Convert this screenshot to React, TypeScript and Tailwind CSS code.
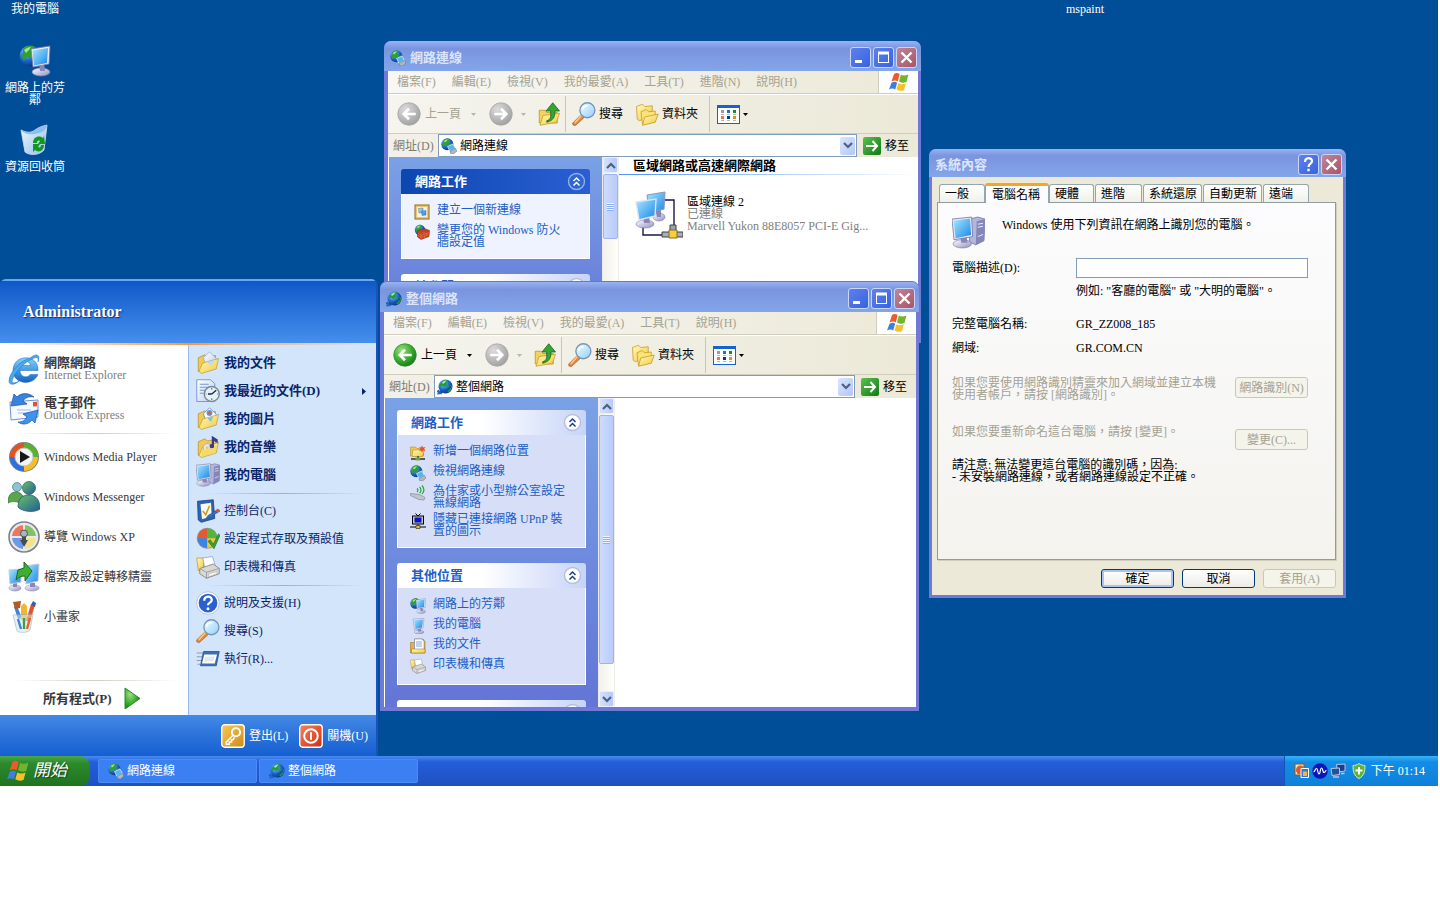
import type { ReactNode } from "react";

const FONT = "font-['Liberation_Serif','Noto_Sans_CJK_TC',serif]";

type IconProps = { className?: string };

function Svg({ className = "h-4 w-4", children }: { className?: string; children: ReactNode }) {
  return (
    <svg viewBox="0 0 32 32" className={`shrink-0 ${className}`} aria-hidden="true">
      {children}
    </svg>
  );
}

function Gradient({ id, from, to, diagonal }: { id: string; from: string; to: string; diagonal?: boolean }) {
  return (
    <linearGradient id={id} x1="0" y1="0" x2={diagonal ? "1" : "0"} y2="1">
      <stop offset="0" stopColor={from} />
      <stop offset="1" stopColor={to} />
    </linearGradient>
  );
}

function SharedGradients() {
  return (
    <svg className="absolute h-0 w-0" aria-hidden="true">
      <defs>
        <Gradient id="screen" from="#a5e8ff" to="#1b86e8" diagonal />
        <Gradient id="folder" from="#fffab8" to="#f2c840" diagonal />
        <Gradient id="stand" from="#ffffff" to="#8d8fbe" diagonal />
        <Gradient id="go" from="#5cc24e" to="#0d7a15" diagonal />
        <Gradient id="lens" from="#f4fdff" to="#8fd0fa" diagonal />
        <Gradient id="ie" from="#7fd4fb" to="#1264c4" />
        <Gradient id="bin" from="#f3faff" to="#8fbdec" diagonal />
        <Gradient id="gold" from="#f5c95a" to="#d08a12" diagonal />
        <Gradient id="red" from="#f5845f" to="#cf2d10" diagonal />
        <Gradient id="paper" from="#ffffff" to="#b9d0f2" diagonal />
        <Gradient id="figure" from="#6cc06a" to="#1f5d94" diagonal />
        <radialGradient id="globe" cx="0.35" cy="0.3" r="0.8">
          <stop offset="0" stopColor="#8fd0ff" />
          <stop offset="0.5" stopColor="#1d6ad6" />
          <stop offset="1" stopColor="#082478" />
        </radialGradient>
        <radialGradient id="green" cx="0.35" cy="0.3" r="0.8">
          <stop offset="0" stopColor="#9be27c" />
          <stop offset="0.6" stopColor="#35a52e" />
          <stop offset="1" stopColor="#12701a" />
        </radialGradient>
        <radialGradient id="grey" cx="0.35" cy="0.3" r="0.8">
          <stop offset="0" stopColor="#dcdcdc" />
          <stop offset="1" stopColor="#9c9c9c" />
        </radialGradient>
      </defs>
    </svg>
  );
}

function GlobeArt() {
  return (
    <>
      <circle cx="11" cy="11" r="10.5" fill="url(#globe)" />
      <path d="M4 4c4-4 9-4 12-2l-3 4 2 3-4 4-3-1-3 4-3-5 2-3zM14 11l7-2c1 5-1 9-5 11l-3-5z" fill="#2f9e35" />
      <path d="M5 5c2-2 5-3 7-3l-2 3-3 3z" fill="#a8e388" />
    </>
  );
}

function NetworkPlaces({ className }: IconProps) {
  return (
    <Svg className={className}>
      <GlobeArt />
      <ellipse cx="22" cy="27" rx="9" ry="4" fill="url(#stand)" stroke="#7c7aa8" strokeWidth=".6" />
      <path d="M20 18h5l1 8h-5z" fill="#8c86b8" />
      <path d="M12 4 31 1l-1 18-16 3z" fill="#eceaf6" stroke="#77749f" strokeWidth=".8" />
      <path d="m13.500 5.500 15.500-2.500-1 15-13 2.500z" fill="url(#screen)" />
    </Svg>
  );
}

function Connections({ className }: IconProps) {
  return (
    <Svg className={className}>
      <g transform="scale(1.15)"><GlobeArt /></g>
      <path d="m13 17 11-5 5 9-11 6z" fill="#57b4f2" stroke="#e8eef4" strokeWidth="1.400" />
      <path d="m18 27 11-6 3 5-7 6-6-1z" fill="#aeb9c2" stroke="#4d5a67" strokeWidth=".8" />
    </Svg>
  );
}

function WholeNetwork({ className }: IconProps) {
  return (
    <Svg className={className}>
      <circle cx="17" cy="15" r="14" fill="url(#globe)" />
      <path d="M7 8c5-7 12-7 16-5l-4 5 1 5-6 3-4-3-4 4c-1-3-1-6 1-9zM21 14l9-1c1 5-2 11-8 14l-3-6z" fill="#239a3c" />
      <path d="M1 23c5 6 17 4 27-8" fill="none" stroke="#1550a8" strokeWidth="4" />
      <path d="m0 31 3-9 8 8z" fill="#2364c4" />
      <path d="M10 7c3-3 6-4 9-4l-3 4-4 3z" fill="#c9f2ff" opacity=".8" />
    </Svg>
  );
}

function Computer({ className }: IconProps) {
  return (
    <Svg className={className}>
      <path d="m17 3 8-2 7 2-1 21-8 4-6-3z" fill="#b4b6de" stroke="#6a6c9c" strokeWidth=".7" />
      <path d="m24 5 8-2-1 21-8 4z" fill="#8486b8" />
      <path d="m25 8 5-1M25 11l5-1M25 20l5-2" stroke="#e5e6fa" />
      <ellipse cx="10" cy="27" rx="9" ry="4" fill="url(#stand)" stroke="#7c7aa8" strokeWidth=".6" />
      <path d="M8 19h6l1 7H9z" fill="#8c86b8" />
      <path d="M0 3 19 1l1 19-18 3z" fill="#eceaf6" stroke="#77749f" strokeWidth=".8" />
      <path d="m1.500 4.500 16-2 1 16-15 3z" fill="url(#screen)" />
    </Svg>
  );
}

function MonitorIcon({ className }: IconProps) {
  return (
    <Svg className={className}>
      <ellipse cx="18" cy="28" rx="10" ry="3.500" fill="url(#stand)" stroke="#7c7aa8" strokeWidth=".8" />
      <path d="M15 19h7v8h-6z" fill="#8c86b8" />
      <path d="m6 2 22-1-2 19-17 4z" fill="#eceaf6" stroke="#77749f" strokeWidth=".8" />
      <path d="m8 4 18-1-2 16-13 3z" fill="url(#screen)" />
    </Svg>
  );
}

function RecycleBin({ className }: IconProps) {
  return (
    <Svg className={className}>
      <path d="M2 6c6 3 10 3 14 0s8-4 12-5l-3 25c-4 5-14 6-19 2z" fill="url(#bin)" stroke="#cfe3f8" strokeWidth=".8" />
      <path d="M2 6c6 3 10 3 14 0s8-4 12-5c-1 6-6 8-12 9S5 10 2 6z" fill="#7fb5ea" opacity=".8" />
      <path d="M14 19c0-7 7-8 10-5l1-2 1 8h-7l2-3c-2-1-3 0-3 2zM25 21c0 6-6 8-9 5l-2 2v-8h7l-2 3c2 1 3 0 3-2z" fill="#0f9a1e" />
    </Svg>
  );
}

function FolderBack() {
  return <path d="M3 9 12 5l3 3 11-2v6L8 29 3 27z" fill="#f0cb50" stroke="#a88118" strokeWidth=".8" />;
}

function FolderFront() {
  return <path d="m9 16 21-6-3 14-20 6-3-3z" fill="url(#folder)" stroke="#b58f24" strokeWidth=".8" />;
}

function DocsFolder({ className }: IconProps) {
  return (
    <Svg className={className}>
      <FolderBack />
      <path d="m10 9 8-8 9 9-6 11-9-5z" fill="url(#paper)" stroke="#6b93cf" strokeWidth=".7" />
      <FolderFront />
      <path d="m15 15 10-3-5 8z" fill="#b9dcf5" />
    </Svg>
  );
}

function PicturesFolder({ className }: IconProps) {
  return (
    <Svg className={className}>
      <FolderBack />
      <path d="m10 9 8-8 9 9-6 11-9-5z" fill="#fff" stroke="#5c80bd" />
      <circle cx="18" cy="8" r="4" fill="#5b9be8" />
      <circle cx="18" cy="8" r="2" fill="#e55a2e" />
      <FolderFront />
      <path d="m15 15 8-2-3 7z" fill="#7cc2ee" />
    </Svg>
  );
}

function MusicFolder({ className }: IconProps) {
  return (
    <Svg className={className}>
      <FolderBack />
      <FolderFront />
      <circle cx="15" cy="17" r="5.500" fill="#e6e3f5" stroke="#a39fca" />
      <circle cx="15" cy="17" r="2" fill="#efc95a" />
      <path d="M21 14V1l8 5v5l-5-3v6a3 3 0 1 1-3-2z" fill="#3a3c8a" />
      <path d="m7 21 21-5-2 8-18 5z" fill="#f7d965" />
    </Svg>
  );
}

function RecentDocs({ className }: IconProps) {
  return (
    <Svg className={className}>
      <path d="M1 1h18l6 5v24H1z" fill="url(#paper)" stroke="#5d83c3" />
      <path d="M5 7h12M5 11h14M5 15h8M5 19h5" stroke="#6f98d6" strokeWidth="1.400" />
      <circle cx="21" cy="20" r="10" fill="#e4f0f7" stroke="#7d8a94" strokeWidth="2" />
      <path d="M21 20l6-5M21 20h-5" stroke="#1b2a3a" strokeWidth="1.800" />
      <path d="M21 12v2M21 26v2M13 20h1M28 20h1" stroke="#3b7a4c" strokeWidth="1.500" />
    </Svg>
  );
}

function ControlPanel({ className }: IconProps) {
  return (
    <Svg className={className}>
      <path d="m2 3 21-2 2 25-18 5-4-3z" fill="#2d62b4" stroke="#173c7c" />
      <path d="m6 7 14-2 1 18-13 4z" fill="#fbf9ea" />
      <path d="m9 16 4 5 5-12" fill="none" stroke="#c69a1b" strokeWidth="2" />
      <path d="m16 22 13-8 3 2-13 8-5 1z" fill="#3574d4" stroke="#163b80" strokeWidth=".7" />
      <path d="m26 15 3-2 3 2-3 3z" fill="#e2542c" />
    </Svg>
  );
}

function ProgramDefaults({ className }: IconProps) {
  return (
    <Svg className={className}>
      <circle cx="15" cy="15" r="14" fill="#8f959c" />
      <path d="M15 15V2A13 13 0 0 0 2 15z" fill="#e8582d" />
      <path d="M15 15V2a13 13 0 0 1 13 13z" fill="#51b63a" />
      <path d="M15 15H2a13 13 0 0 0 13 13z" fill="#3d83e0" />
      <path d="M15 15h13a13 13 0 0 1-13 13z" fill="#f4c934" />
      <path d="m16 19 3-2 4 6 7-14 2 2-8 18z" fill="#3aa335" stroke="#1b6b1c" strokeWidth=".8" />
    </Svg>
  );
}

function PrinterIcon({ className }: IconProps) {
  return (
    <Svg className={className}>
      <path d="M1 4h9v15l-7 2z" fill="url(#folder)" stroke="#a98624" strokeWidth=".8" />
      <path d="m9 4 13-2 4 13-14 4z" fill="#fff" stroke="#8aa0bc" />
      <path d="m5 18 18-6 8 6v7l-17 6-9-6z" fill="#d9d9d4" stroke="#77777a" />
      <path d="m5 18 9 5 17-5M14 23v8" fill="none" stroke="#8b8b8e" />
      <path d="m17 25 11-3v3l-11 4z" fill="#f8f8f8" stroke="#9a9a9a" strokeWidth=".6" />
    </Svg>
  );
}

function HelpIcon({ className }: IconProps) {
  return (
    <Svg className={className}>
      <circle cx="16" cy="16" r="15" fill="#fff" stroke="#a6b6d3" />
      <circle cx="16" cy="16" r="12.500" fill="#2b60cf" />
      <path d="M11 13c0-7 10-7 10-1 0 4-5 3-5 7" fill="none" stroke="#fff" strokeWidth="3" />
      <circle cx="16" cy="23.500" r="2" fill="#fff" />
    </Svg>
  );
}

function SearchIcon({ className }: IconProps) {
  return (
    <Svg className={className}>
      <path d="m1 28 12-12 4 4L5 31c-3 1-5-1-4-3z" fill="#e4883c" stroke="#9a4e1b" strokeWidth=".8" />
      <path d="m3 27 9-10 2 1-10 11z" fill="#ffc58b" />
      <circle cx="20.500" cy="11" r="10" fill="url(#lens)" stroke="#7695bb" strokeWidth="1.800" />
      <path d="M14 10c1-4 4-5 7-5" stroke="#fff" strokeWidth="2" fill="none" />
    </Svg>
  );
}

function RunIcon({ className }: IconProps) {
  return (
    <Svg className={className}>
      <path d="M1 8h9M1 13h7M1 18h6M2 23h4" stroke="#8b9db6" strokeWidth="1.400" />
      <path d="M10 6h21l-4 19H6z" fill="#3d6fb5" stroke="#264c86" />
      <path d="M11 10h17l-3 12H8z" fill="#fdfdf8" />
      <path d="m12 13 13-.5-2 6-12 1z" fill="#e2e8ef" />
    </Svg>
  );
}

function InternetExplorer({ className }: IconProps) {
  return (
    <Svg className={className}>
      <path fillRule="evenodd" d="M30 17.500H12c0 7 8 8 10 4h8c-5 12-25 10-25-4 0-17 26-17 25 0zm-7.500-5c-1-6-9-6-10.500 0z" fill="url(#ie)" stroke="#1b66b9" strokeWidth=".5" />
      <path d="M22 5c6-5 11-4 8 4 1-6-2-5-6-3C13 11 4 24 4 29c2 2 6 0 8-2-4 5-11 6-11 1C1 20 12 8 22 5z" fill="#4aaaf0" stroke="#1f6fc2" strokeWidth=".5" />
    </Svg>
  );
}

function OutlookExpress({ className }: IconProps) {
  return (
    <Svg className={className}>
      <path d="m2 9 28-2v17L3 27z" fill="#f6f8ff" stroke="#7191cd" />
      <path d="m25 9 4-.3v4.600l-4 .3z" fill="#d9542f" />
      <path d="M9 17h14M10 20h11" stroke="#a9bbe0" />
      <path d="M3 13 6 1l3 3c5-5 12-4 17 0-6-1-9 1-11 4l4 3z" fill="#3784df" stroke="#1552a8" strokeWidth=".7" />
      <path d="m30 17-3 13-3-3c-4 5-10 5-14 2 5 0 7-2 9-5l-4-3z" fill="#3f93ea" stroke="#1552a8" strokeWidth=".7" />
    </Svg>
  );
}

function MediaPlayer({ className }: IconProps) {
  return (
    <Svg className={className}>
      <circle cx="16" cy="16" r="15" fill="#7b838a" />
      <path d="M16 16V2A14 14 0 0 0 2 16z" fill="#e8501f" />
      <path d="M16 16V2a14 14 0 0 1 14 14z" fill="#55b42c" />
      <path d="M16 16H2a14 14 0 0 0 14 14z" fill="#2c6fe0" />
      <path d="M16 16h14a14 14 0 0 1-14 14z" fill="#f2bf24" />
      <circle cx="16" cy="16" r="9" fill="#f4f4f1" stroke="#c5c5bf" />
      <path d="m12 10 10 6-10 6z" fill="#17181a" />
    </Svg>
  );
}

function Messenger({ className }: IconProps) {
  return (
    <Svg className={className}>
      <circle cx="9" cy="6" r="4.500" fill="#8cc4cf" stroke="#3c7786" strokeWidth=".7" />
      <path d="M0 22c0-8 3-11 8-11 4 0 7 3 8 6l-2 6C9 20 4 20 0 22z" fill="#5ba64a" stroke="#2b6d32" strokeWidth=".7" />
      <circle cx="21" cy="7" r="6.500" fill="url(#figure)" stroke="#22596a" strokeWidth=".7" />
      <path d="M10 26c0-9 5-12 11-12 7 0 11 5 11 14-5 4-18 3-22-2z" fill="url(#figure)" stroke="#1d4a72" strokeWidth=".7" />
    </Svg>
  );
}

function TourIcon({ className }: IconProps) {
  return (
    <Svg className={className}>
      <circle cx="16" cy="16" r="15" fill="#e7e9ec" stroke="#7d8288" strokeWidth="1.600" />
      <path d="M15 15V4A12 12 0 0 0 4 15z" fill="#ea7860" />
      <path d="M17 15V4a12 12 0 0 1 11 11z" fill="#7fc45e" />
      <path d="M15 17H4a12 12 0 0 0 11 11z" fill="#6c98ea" />
      <path d="M17 17h11a12 12 0 0 1-11 11z" fill="#f1e48a" />
      <circle cx="16" cy="12.500" r="3.500" fill="#aeb4ba" stroke="#4d545b" />
      <path d="m16 26-4-7h2v-3h4v3h2z" fill="#464d54" />
    </Svg>
  );
}

function TransferWizard({ className }: IconProps) {
  return (
    <Svg className={className}>
      <ellipse cx="7" cy="27" rx="6" ry="3" fill="url(#stand)" stroke="#7c7aa8" strokeWidth=".5" />
      <ellipse cx="24" cy="27" rx="7" ry="3" fill="url(#stand)" stroke="#7c7aa8" strokeWidth=".5" />
      <path d="M5 22h4v4H5zM22 22h5v4h-5z" fill="#8c86b8" />
      <path d="m1 9 12-1v13L2 23z" fill="url(#screen)" stroke="#c3c7e0" />
      <path d="m17 5 14-2-1 17-12 3z" fill="url(#screen)" stroke="#c3c7e0" />
      <path d="m8 19 2-10 6-2V1l8 9-7 10v-5c-4 0-6 1-9 4z" fill="#3fae35" stroke="#1a6d1c" />
    </Svg>
  );
}

function PaintIcon({ className }: IconProps) {
  return (
    <Svg className={className}>
      <path d="m10 18-4-12 3-1 5 12z" fill="#3f83da" />
      <path d="m5 1 8-1-1 7-5 1z" fill="#b25726" />
      <path d="m13 19V5l3-3 3 3v15z" fill="#f2b82b" />
      <path d="m18 20 5-17 4 1-5 17z" fill="#e2522b" />
      <path d="m23 4 2-4 3 2-1 4z" fill="#3b5fa8" />
      <path d="m5 14 20-1-3 16c-3 3-10 3-13 1z" fill="#d2e6ef" opacity=".55" stroke="#8ba9b7" />
      <path d="m10 18 3 10" stroke="#3f83da" strokeWidth="2.400" />
      <path d="M16 17v11" stroke="#3fa043" strokeWidth="2.400" />
      <path d="m22 17-3 11" stroke="#e2622b" strokeWidth="2.400" />
    </Svg>
  );
}

function KeyIcon({ className }: IconProps) {
  return (
    <Svg className={className}>
      <rect x="1" y="1" width="30" height="30" rx="4" fill="url(#gold)" stroke="#fff" strokeWidth="1.800" />
      <circle cx="20" cy="11" r="5.500" fill="none" stroke="#fff" strokeWidth="2.600" />
      <path d="M16 15 7 24v3h4v-3h3v-3h2l2-3" fill="none" stroke="#fff" strokeWidth="2" />
    </Svg>
  );
}

function PowerIcon({ className }: IconProps) {
  return (
    <Svg className={className}>
      <rect x="1" y="1" width="30" height="30" rx="4" fill="url(#red)" stroke="#fff" strokeWidth="1.800" />
      <circle cx="16" cy="16" r="9" fill="none" stroke="#fff" strokeWidth="2.600" />
      <path d="M16 11v10" stroke="#fff" strokeWidth="2.600" />
    </Svg>
  );
}

function WindowsFlag({ className }: IconProps) {
  return (
    <Svg className={className}>
      <path d="M8 3c3-2 6-2 9 0l-3 12c-3-2-6-2-10 0z" fill="#ee5a28" />
      <path d="M19 4c3 2 7 2 12 0l-3 12c-5 2-8 1-12-1z" fill="#6fb52e" />
      <path d="M4 17c4-2 6-2 9 0l-3 11c-3-2-6-2-10 0z" fill="#3c7fe0" />
      <path d="M15 18c4 2 8 2 12 0l-3 11c-5 2-8 1-12-1z" fill="#f7c02a" />
    </Svg>
  );
}

function RoundArrow({ className, tone, back }: IconProps & { tone: "green" | "grey"; back?: boolean }) {
  return (
    <Svg className={className}>
      <circle cx="16" cy="16" r="15" fill={tone === "green" ? "url(#green)" : "url(#grey)"} stroke={tone === "green" ? "#2c8a2a" : "#a5a5a5"} />
      <path d={back ? "M25 16H9m7-7-7 7 7 7" : "M7 16h16m-7-7 7 7-7 7"} fill="none" stroke="#fff" strokeWidth="3.600" />
    </Svg>
  );
}

function UpFolder({ className }: IconProps) {
  return (
    <Svg className={className}>
      <path d="M3 11h8l2 3h14v14H3z" fill="#f3d260" stroke="#b8901f" />
      <path d="m8 18 22-3-4 12-22 4z" fill="url(#folder)" stroke="#c59b24" />
      <path d="M13 25c5-1 6-5 5-13h-6l9-11 9 11h-6c0 9-3 13-11 15z" fill="#35a531" stroke="#145f17" />
    </Svg>
  );
}

function FoldersIcon({ className }: IconProps) {
  return (
    <Svg className={className}>
      <path d="M2 6 10 3l3 3 10-1v12L6 25 3 23z" fill="url(#folder)" stroke="#c4961c" />
      <path d="m8 13 7-3 3 3 9-1v14L10 30z" fill="#fbe27a" stroke="#c4961c" />
      <path d="m13 20 18-4-4 11-17 4z" fill="url(#folder)" stroke="#c4961c" />
    </Svg>
  );
}

function ViewsIcon() {
  return (
    <svg viewBox="0 0 23 19" className="h-[19px] w-[23px] shrink-0" aria-hidden="true" shapeRendering="crispEdges">
      <rect width="23" height="19" fill="#1563d2" />
      <rect x="1" y="3" width="21" height="15" fill="#fff" />
      <path d="M4 5h3v3H4z" fill="#9c93c6" /><path d="M10 5h3v3h-3z" fill="#1676cf" /><path d="M16 5h3v3h-3z" fill="#129318" />
      <path d="M4 11h3v3H4z" fill="#f07848" /><path d="M10 11h3v3h-3z" fill="#10308d" /><path d="M16 11h3v3h-3z" fill="#c8a018" />
      <path d="M4 9h3v1H4zM10 9h3v1h-3zM16 9h3v1h-3zM4 15h3v1H4zM10 15h3v1h-3zM16 15h3v1h-3z" fill="#b5b5b5" />
    </svg>
  );
}

function NewConnection({ className }: IconProps) {
  return (
    <Svg className={className}>
      <rect x="2" y="2" width="28" height="28" fill="#e9c86a" stroke="#8e6a22" strokeWidth="2" />
      <rect x="6" y="6" width="20" height="20" fill="#f7f3e4" />
      <path d="m9 9 9-1v9l-8 1zM15 14l9-1v9l-8 1z" fill="url(#screen)" stroke="#58709c" />
    </Svg>
  );
}

function Firewall({ className }: IconProps) {
  return (
    <Svg className={className}>
      <g transform="translate(1 1)"><GlobeArt /></g>
      <path d="m7 14 14-5 10 4-1 12-16 6-7-5z" fill="#c8421e" stroke="#742310" />
      <path d="m7 18 7 5 16-6M7 22l7 5 16-6M14 19v12M20 16v5M25 18v5M21 23v5" stroke="#e89068" strokeWidth=".8" fill="none" />
    </Svg>
  );
}

function AddPlace({ className }: IconProps) {
  return (
    <Svg className={className}>
      <path d="M1 4h10l3 3h13v15H1z" fill="#efc648" stroke="#a98018" />
      <path d="m6 10 23-1-4 14H4z" fill="url(#folder)" stroke="#a98018" />
      <path d="m24 1 2 4 5-1-3 4 3 4-5-1-2 4-2-4-4 1 3-4-3-4 4 1z" fill="#ee4f22" />
      <path d="M2 28h28M16 22v6" stroke="#555b5e" strokeWidth="4" />
      <path d="M11 25h9v6h-9z" fill="#74a53c" />
    </Svg>
  );
}

function WirelessIcon({ className }: IconProps) {
  return (
    <Svg className={className}>
      <path d="m1 17 18 2 11 6-2 5-11-1L1 21z" fill="#c0c4ce" stroke="#6d717b" />
      <path d="M14 7c2 2 2 5 0 7M19 4c4 4 4 9 0 12M24 1c5 6 5 12 0 17" fill="none" stroke="#28a828" strokeWidth="2.400" />
    </Svg>
  );
}

function UpnpIcon({ className }: IconProps) {
  return (
    <Svg className={className}>
      <path d="m11 1 5 5 5-5M16 23v6M0 28h32" fill="none" stroke="#000" strokeWidth="2" />
      <rect x="5" y="6" width="22" height="16" fill="#c6c6c6" stroke="#000" strokeWidth="2" />
      <rect x="9" y="9" width="14" height="10" fill="#0a12c8" />
      <path d="M12 25h8v6h-8z" fill="#e6c22a" stroke="#000" />
    </Svg>
  );
}

function DocumentsIcon({ className }: IconProps) {
  return (
    <Svg className={className}>
      <path d="M1 9h10v21H1zM9 2h17l4 5v23H9z" fill="#e5b33c" stroke="#946a14" />
      <path d="M9 2h14l5 4v19H9z" fill="#fff" stroke="#5579b8" />
      <path d="M12 8h12M12 12h12M12 16h12" stroke="#5d92dc" strokeWidth="1.600" />
      <path d="M3 22h27v8H3z" fill="url(#folder)" stroke="#946a14" />
    </Svg>
  );
}

function LanIcon() {
  return (
    <svg viewBox="0 0 48 48" className="h-12 w-12 shrink-0" aria-hidden="true">
      <path d="M28 9h11v26M8 36v8h22" fill="none" stroke="#1a1450" strokeWidth="1.400" />
      <ellipse cx="24" cy="26" rx="6" ry="4" fill="url(#stand)" stroke="#7c7aa8" strokeWidth=".6" />
      <path d="M20 18h6v8h-4z" fill="#8c86b8" />
      <path d="m12 4 18-3-1 17-15 4z" fill="url(#screen)" stroke="#8f93bd" />
      <ellipse cx="10" cy="33" rx="9" ry="4" fill="url(#stand)" stroke="#7c7aa8" strokeWidth=".6" />
      <path d="M8 25h6l1 7H9z" fill="#8c86b8" />
      <path d="m1 11 20-3-1 17-16 4z" fill="url(#screen)" stroke="#dfe2f2" strokeWidth="1.400" />
      <path d="M35 34h6v8h-6z" fill="#9da3a8" stroke="#3b3f44" />
      <path d="M27 41h21v5H27z" fill="#a9b0b4" stroke="#3b3f44" />
      <path d="M34 39h8v8h-8z" fill="#f3cf45" stroke="#8a6a10" />
    </svg>
  );
}

function Triangle({ tone }: { tone: string }) {
  return (
    <svg viewBox="0 0 5 3" className={`h-[3px] w-[5px] shrink-0 ${tone}`} aria-hidden="true">
      <path d="M0 0h5L2.500 3z" fill="currentColor" />
    </svg>
  );
}

function Chevron({ up }: { up?: boolean }) {
  return (
    <svg viewBox="0 0 10 7" className="h-[7px] w-[10px]" aria-hidden="true">
      <path d={up ? "m1 6 4-4 4 4" : "m1 1 4 4 4-4"} fill="none" stroke="#4d6185" strokeWidth="2.200" />
    </svg>
  );
}

const captionBase = "flex h-[21px] w-[21px] items-center justify-center rounded-[3px] border border-[#c8d6fa]";

function CaptionButton({ kind }: { kind: "min" | "max" | "close" | "help" }) {
  const tone =
    kind === "close"
      ? "bg-linear-to-br from-[#c08598] to-[#a85468]"
      : "bg-linear-to-br from-[#5f80ea] to-[#3563e2]";
  const label = { min: "最小化", max: "最大化", close: "關閉", help: "說明" }[kind];
  return (
    <button type="button" aria-label={label} className={`${captionBase} ${tone}`}>
      <svg viewBox="0 0 19 19" className="h-[19px] w-[19px]" fill="none" stroke="#fff" aria-hidden="true">
        {kind === "min" && <path d="M4 13.500h7" strokeWidth="3" />}
        {kind === "max" && (
          <>
            <rect x="4.500" y="4.500" width="10" height="10" />
            <path d="M4 5h11" strokeWidth="3" />
          </>
        )}
        {kind === "close" && <path d="m4.500 4.500 10 10m0-10-10 10" strokeWidth="2.400" />}
        {kind === "help" && (
          <>
            <path d="M6 7c0-5 7-5 7-1 0 3-3.500 2.500-3.500 6" strokeWidth="2.200" />
            <path d="M8.300 15h2.400" strokeWidth="2.400" />
          </>
        )}
      </svg>
    </button>
  );
}

function TitleBar({ title, icon, buttons, height }: { title: string; icon?: ReactNode; buttons: ReactNode; height: string }) {
  return (
    <header className={`flex shrink-0 items-center gap-1 bg-linear-to-b from-[#98b3f0] via-[#7a94df] via-25% to-[#84a5ea] pt-[3px] pr-1 pl-[6px] ${height}`}>
      {icon}
      <h2 className="flex-1 text-[13px] font-bold text-[#dbe5fc]">{title}</h2>
      <div className="flex gap-[2px]">{buttons}</div>
    </header>
  );
}

function MenuBar({ items }: { items: string[] }) {
  return (
    <nav className="flex h-[23px] shrink-0 border-b border-[#d0cdbc] bg-linear-to-r from-[#f8f7f3] to-[#ece9d8]">
      <div className="flex flex-1 gap-4 pl-[9px] text-[#a5a293]">
        {items.map((m) => (
          <button key={m} type="button">{m}</button>
        ))}
      </div>
      <div className="flex w-10 items-center justify-center border-l border-[#d0cdbc] bg-white">
        <WindowsFlag className="h-5 w-5" />
      </div>
    </nav>
  );
}

function Toolbar({ canGoBack }: { canGoBack: boolean }) {
  return (
    <div className="flex h-10 shrink-0 items-center border-t border-b border-t-white border-b-[#d0cdbc] bg-linear-to-r from-[#f5f4ee] to-[#ece9d8] pl-[9px]">
      <button type="button" className={`flex items-center gap-1 ${canGoBack ? "text-black" : "text-[#a5a293]"}`}>
        <RoundArrow className="h-6 w-6" tone={canGoBack ? "green" : "grey"} back />
        上一頁
      </button>
      <span className="ml-[10px]"><Triangle tone={canGoBack ? "text-black" : "text-[#b9b6a8]"} /></span>
      <button type="button" aria-label="下一頁" className="ml-[13px]"><RoundArrow className="h-6 w-6" tone="grey" /></button>
      <span className="ml-2"><Triangle tone="text-[#b9b6a8]" /></span>
      <button type="button" aria-label="上移" className="ml-[11px]"><UpFolder className="h-6 w-6" /></button>
      <span className="ml-1 h-9 w-px bg-[#c9c6b6]" />
      <button type="button" className="ml-[6px] flex items-center gap-[3px]">
        <SearchIcon className="h-6 w-6" />
        搜尋
      </button>
      <button type="button" className="ml-3 flex items-center gap-[3px]">
        <FoldersIcon className="h-6 w-6" />
        資料夾
      </button>
      <span className="ml-[11px] h-9 w-px bg-[#c9c6b6]" />
      <button type="button" aria-label="檢視" className="ml-[7px] flex items-center gap-[3px]">
        <ViewsIcon />
        <Triangle tone="text-black" />
      </button>
    </div>
  );
}

function AddressBar({ id, value, icon }: { id: string; value: string; icon: ReactNode }) {
  return (
    <div className="flex h-[23px] shrink-0 items-stretch bg-linear-to-r from-[#f2f0e8] to-[#ece9d8]">
      <label htmlFor={id} className="flex w-[50px] items-center pl-[5px] text-[#7f7c73]">網址(D)</label>
      <div className="flex flex-1 items-center border border-[#7f9db9] bg-white pr-px pl-[2px]">
        {icon}
        <input id={id} defaultValue={value} className="ml-[3px] min-w-0 flex-1 outline-none" />
        <button type="button" aria-label="展開" className="flex h-[18px] w-[15px] items-center justify-center rounded-[2px] bg-linear-to-br from-[#dbe5fe] to-[#b2c6f8]">
          <Chevron />
        </button>
      </div>
      <button type="button" className="flex w-[61px] items-center gap-1 pl-[6px]">
        <svg viewBox="0 0 18 18" className="h-[18px] w-[18px]" aria-hidden="true">
          <rect width="18" height="18" rx="2" fill="url(#go)" />
          <path d="M3 9h11M9.500 4 14 9l-4.500 5" stroke="#fff" strokeWidth="2" fill="none" />
        </svg>
        移至
      </button>
    </div>
  );
}

type Task = { label: string; icon: ReactNode };

function TaskCard({ title, tasks, primary }: { title?: string; tasks: Task[]; primary?: boolean }) {
  return (
    <section>
      <h3
        className={`flex h-[25px] items-center justify-between rounded-t-[3px] pr-1 pl-[14px] text-[13px] font-bold ${
          primary ? "bg-linear-to-r from-[#0a47b1] to-[#2a5fd2] text-white" : "bg-linear-to-r from-white via-white via-45% to-[#c7d4f7] text-[#215dc6]"
        }`}
      >
        <span>{title}</span>
        <button type="button" aria-label="收合">
          <svg viewBox="0 0 19 19" className="h-[19px] w-[19px]" fill="none" aria-hidden="true">
            <circle cx="9.500" cy="9.500" r="8" fill={primary ? "#2f66cf" : "#fff"} stroke={primary ? "#8fb0ee" : "#b4bfe0"} strokeWidth="1.400" />
            <path d="m6.500 9 3-3 3 3m-6 4.500 3-3 3 3" stroke={primary ? "#fff" : "#1f3f86"} strokeWidth="1.500" />
          </svg>
        </button>
      </h3>
      <ul className={`flex flex-col gap-1 border border-t-0 border-white py-[10px] pr-3 pl-3 text-[#215dc6] ${primary ? "bg-[#eff3ff]" : "bg-[#d6dff7]"}`}>
        {tasks.map((t) => (
          <li key={t.label}>
            <a href="#" className="flex min-h-4 items-start gap-[7px]">
              {t.icon}
              <span className="w-[134px] leading-3">{t.label}</span>
            </a>
          </li>
        ))}
      </ul>
    </section>
  );
}

function ScrollBar({ short }: { short?: boolean }) {
  const end = "flex h-4 shrink-0 items-center justify-center rounded-[2px] border border-[#e6eeff] bg-linear-to-r from-[#d4e0fd] to-[#b6c9f8]";
  return (
    <div className="flex w-[17px] shrink-0 flex-col gap-px border-r border-l border-[#eeede5] bg-linear-to-r from-[#f3f1ec] to-[#fefefb]">
      <div className={end}><Chevron up /></div>
      <div className={`flex items-center justify-center rounded-[2px] border border-[#9db4ec] bg-linear-to-r from-[#cddbfd] to-[#b9cbf9] ${short ? "h-[65px]" : "h-[249px]"}`}>
        <span className="h-2 w-[7px] bg-[repeating-linear-gradient(#eef4fe_0_1px,#8cb0f8_1px_2px)]" />
      </div>
      <div className={`mt-auto ${end}`}><Chevron /></div>
    </div>
  );
}

function ExplorerBody({ cards, short, children }: { cards: ReactNode; short?: boolean; children?: ReactNode }) {
  return (
    <div className="flex min-h-0 flex-1 bg-white pl-px">
      <aside className="flex w-[213px] shrink-0 flex-col gap-[15px] overflow-hidden bg-linear-to-b from-[#7aa1e6] to-[#6375d6] px-3 pt-3">{cards}</aside>
      <ScrollBar short={short} />
      <div className="min-w-0 flex-1">{children}</div>
    </div>
  );
}

const frame = "absolute flex flex-col overflow-hidden rounded-t-[7px] bg-[#6f7ad6]";
const inner = "flex min-h-0 flex-1 flex-col border-r-[3px] border-b-4 border-l-4 border-[#6f7ad6]";

const windowButtons = (
  <>
    <CaptionButton kind="min" />
    <CaptionButton kind="max" />
    <CaptionButton kind="close" />
  </>
);

function ConnectionsWindow() {
  return (
    <section className={`${frame} top-[41px] left-[384px] h-[302px] w-[537px]`}>
      <TitleBar height="h-[30px]" title="網路連線" icon={<Connections className="h-4 w-4" />} buttons={windowButtons} />
      <div className={inner}>
        <MenuBar items={["檔案(F)", "編輯(E)", "檢視(V)", "我的最愛(A)", "工具(T)", "進階(N)", "說明(H)"]} />
        <Toolbar canGoBack={false} />
        <AddressBar id="address-connections" value="網路連線" icon={<Connections className="h-4 w-4" />} />
        <ExplorerBody
          short
          cards={
            <>
              <TaskCard
                primary
                title="網路工作"
                tasks={[
                  { label: "建立一個新連線", icon: <NewConnection /> },
                  { label: "變更您的 Windows 防火牆設定值", icon: <Firewall /> },
                ]}
              />
              <TaskCard title="請參閱" tasks={[]} />
            </>
          }
        >
          <h3 className="h-[17px] pt-[3px] pl-[14px] text-[13px] leading-3 font-bold">區域網路或高速網際網路</h3>
          <div className="h-px bg-linear-to-r from-[#4a90f5] to-white" />
          <div className="flex gap-1 pt-4 pl-4">
            <LanIcon />
            <div className="pt-[5px] leading-3 text-[#808080]">
              <p className="text-black">區域連線 2</p>
              <p>已連線</p>
              <p>Marvell Yukon 88E8057 PCI-E Gig...</p>
            </div>
          </div>
        </ExplorerBody>
      </div>
    </section>
  );
}

function NetworkWindow() {
  return (
    <section className={`${frame} top-[282px] left-[380px] h-[429px] w-[539px] shadow-[0_-1px_0_#6476cf]`}>
      <TitleBar height="h-[30px]" title="整個網路" icon={<WholeNetwork className="h-4 w-4" />} buttons={windowButtons} />
      <div className={inner}>
        <MenuBar items={["檔案(F)", "編輯(E)", "檢視(V)", "我的最愛(A)", "工具(T)", "說明(H)"]} />
        <Toolbar canGoBack />
        <AddressBar id="address-network" value="整個網路" icon={<WholeNetwork className="h-4 w-4" />} />
        <ExplorerBody
          cards={
            <>
              <TaskCard
                title="網路工作"
                tasks={[
                  { label: "新增一個網路位置", icon: <AddPlace /> },
                  { label: "檢視網路連線", icon: <Connections /> },
                  { label: "為住家或小型辦公室設定無線網路", icon: <WirelessIcon /> },
                  { label: "隱藏已連接網路 UPnP 裝置的圖示", icon: <UpnpIcon /> },
                ]}
              />
              <TaskCard
                title="其他位置"
                tasks={[
                  { label: "網路上的芳鄰", icon: <NetworkPlaces /> },
                  { label: "我的電腦", icon: <MonitorIcon /> },
                  { label: "我的文件", icon: <DocumentsIcon /> },
                  { label: "印表機和傳真", icon: <PrinterIcon /> },
                ]}
              />
              <TaskCard tasks={[]} />
            </>
          }
        />
      </div>
    </section>
  );
}

const tabs = [
  { label: "一般", width: "w-[46px]" },
  { label: "電腦名稱", width: "w-[64px]", active: true },
  { label: "硬體", width: "w-[45px]" },
  { label: "進階", width: "w-[47px]" },
  { label: "系統還原", width: "w-[59px]" },
  { label: "自動更新", width: "w-[59px]" },
  { label: "遠端", width: "w-[46px]" },
];

const disabledButton = "h-[21px] w-[73px] shrink-0 rounded-[3px] border border-[#c9c7ba] bg-[#f5f4ea] text-[#a5a293]";
const dialogButton = "flex h-[19px] w-[73px] items-center justify-center rounded-[3px] border border-[#003c74] bg-linear-to-b from-white to-[#ecebe5]";

function SystemDialog() {
  return (
    <section role="dialog" aria-label="系統內容" className={`${frame} top-[149px] left-[929px] h-[449px] w-[417px]`}>
      <TitleBar
        height="h-[28px]"
        title="系統內容"
        buttons={
          <>
            <CaptionButton kind="help" />
            <CaptionButton kind="close" />
          </>
        }
      />
      <div className="flex flex-1 flex-col border-x-[3px] border-b-[3px] border-[#6f7ad6] bg-[#ece9d8] pt-[5px] pr-[7px] pl-[5px]">
        <div role="tablist" className="flex h-5 items-end gap-px pl-[2px]">
          {tabs.map((t) => (
            <button
              key={t.label}
              type="button"
              role="tab"
              aria-selected={!!t.active}
              className={`rounded-t-[3px] border border-b-0 border-[#91a7b4] pl-[5px] text-left whitespace-nowrap ${t.width} ${
                t.active ? "relative top-px -mx-px h-5 border-t-[3px] border-t-[#f5a623] bg-[#fcfcfe] pl-[6px]" : "h-[18px] bg-linear-to-b from-white to-[#f0f0ea]"
              }`}
            >
              {t.label}
            </button>
          ))}
        </div>
        <div role="tabpanel" className="h-[358px] border border-[#919b9c] bg-linear-to-b from-[#fcfcfe] to-[#f4f3ee] pt-[13px] pr-[27px] pl-[14px] leading-3 shadow-[1px_1px_0_#d0cebf]">
          <div className="flex h-8 gap-[17px]">
            <Computer className="h-[33px] w-[33px]" />
            <p className="pt-[3px]">Windows 使用下列資訊在網路上識別您的電腦。</p>
          </div>
          <div className="mt-[10px] grid grid-cols-[124px_1fr] items-center">
            <label htmlFor="description">電腦描述(D):</label>
            <input id="description" className="h-5 w-full border border-[#7f9db9] bg-white px-1 outline-none" />
            <p className="col-start-2 mt-[7px]">例如: "客廳的電腦" 或 "大明的電腦"。</p>
          </div>
          <dl className="mt-[21px] grid grid-cols-[124px_1fr] gap-y-3">
            <dt>完整電腦名稱:</dt>
            <dd>GR_ZZ008_185</dd>
            <dt>網域:</dt>
            <dd>GR.COM.CN</dd>
          </dl>
          <div className="mt-[23px] flex justify-between text-[#a5a293]">
            <p className="w-[270px]">如果您要使用網路識別精靈來加入網域並建立本機使用者帳戶，請按 [網路識別]。</p>
            <button type="button" disabled className={disabledButton}>網路識別(N)</button>
          </div>
          <div className="mt-[25px] flex h-6 justify-between text-[#a5a293]">
            <p>如果您要重新命名這台電腦，請按 [變更]。</p>
            <button type="button" disabled className={`self-end ${disabledButton}`}>變更(C)...</button>
          </div>
          <p className="mt-[9px]">請注意: 無法變更這台電腦的識別碼，因為:</p>
          <p>- 未安裝網路連線，或者網路連線設定不正確。</p>
        </div>
        <div className="mt-[9px] flex justify-end gap-2">
          <button type="button" className={`${dialogButton} shadow-[inset_0_0_0_2px_#a9c3f3]`}>確定</button>
          <button type="button" className={dialogButton}>取消</button>
          <button type="button" disabled className="flex h-[19px] w-[73px] items-center justify-center rounded-[3px] border border-[#c9c7ba] bg-[#f5f4ea] text-[#a5a293]">套用(A)</button>
        </div>
      </div>
    </section>
  );
}

const pinned = [
  { label: "網際網路", sub: "Internet Explorer", icon: <InternetExplorer className="h-8 w-8" /> },
  { label: "電子郵件", sub: "Outlook Express", icon: <OutlookExpress className="h-8 w-8" /> },
];

const recent = [
  { label: "Windows Media Player", icon: <MediaPlayer className="h-8 w-8" /> },
  { label: "Windows Messenger", icon: <Messenger className="h-8 w-8" /> },
  { label: "導覽 Windows XP", icon: <TourIcon className="h-8 w-8" /> },
  { label: "檔案及設定轉移精靈", icon: <TransferWizard className="h-8 w-8" /> },
  { label: "小畫家", icon: <PaintIcon className="h-8 w-8" /> },
];

const places: { label: string; icon: ReactNode; submenu?: boolean }[] = [
  { label: "我的文件", icon: <DocsFolder className="h-6 w-6" /> },
  { label: "我最近的文件(D)", icon: <RecentDocs className="h-6 w-6" />, submenu: true },
  { label: "我的圖片", icon: <PicturesFolder className="h-6 w-6" /> },
  { label: "我的音樂", icon: <MusicFolder className="h-6 w-6" /> },
  { label: "我的電腦", icon: <Computer className="h-6 w-6" /> },
];

const settings = [
  { label: "控制台(C)", icon: <ControlPanel className="h-6 w-6" /> },
  { label: "設定程式存取及預設值", icon: <ProgramDefaults className="h-6 w-6" /> },
  { label: "印表機和傳真", icon: <PrinterIcon className="h-6 w-6" /> },
];

const tools = [
  { label: "說明及支援(H)", icon: <HelpIcon className="h-6 w-6" /> },
  { label: "搜尋(S)", icon: <SearchIcon className="h-6 w-6" /> },
  { label: "執行(R)...", icon: <RunIcon className="h-6 w-6" /> },
];

function PlaceRow({ label, icon, strong, submenu }: { label: string; icon: ReactNode; strong?: boolean; submenu?: boolean }) {
  return (
    <a href="#" className={`flex h-7 items-center gap-1 pr-[10px] pl-[7px] text-[#0a246a] ${strong ? "text-[13px] font-bold" : ""}`}>
      {icon}
      <span className="flex-1">{label}</span>
      {submenu && (
        <svg viewBox="0 0 4 7" className="h-[7px] w-1" aria-hidden="true">
          <path d="M0 0v7l4-3.500z" fill="#0a246a" />
        </svg>
      )}
    </a>
  );
}

function Rule({ tone }: { tone: string }) {
  return (
    <div className="flex h-2 items-center pr-3 pl-4">
      <div className={`h-px flex-1 bg-linear-to-r from-transparent to-transparent ${tone}`} />
    </div>
  );
}

function StartMenu() {
  return (
    <section className="absolute bottom-0 left-0 flex h-[477px] w-[378px] flex-col overflow-hidden rounded-t-[6px] border-r-2 border-[#1c50ba] bg-[#2268dc]">
      <header className="flex h-16 shrink-0 items-center border-t-2 border-[#6ea4f0] bg-linear-to-b from-[#0f58c8] to-[#458fee] pl-[23px]">
        <h2 className="text-[16px] font-bold text-white [text-shadow:1px_1px_1px_#0a2f80]">Administrator</h2>
      </header>
      <div className="h-[2px] shrink-0 bg-linear-to-r from-white via-[#f59a36] to-[#d3e5fa]" />
      <div className="flex min-h-0 flex-1">
        <div className="flex w-[188px] flex-col bg-white pt-1 text-[#373738]">
          {pinned.map((p) => (
            <a key={p.label} href="#" className="flex h-10 items-center gap-1 pl-2 leading-3">
              {p.icon}
              <span>
                <span className="block text-[13px] font-bold">{p.label}</span>
                <span className="block text-[#808080]">{p.sub}</span>
              </span>
            </a>
          ))}
          <Rule tone="via-[#cfccc0]" />
          {recent.map((r) => (
            <a key={r.label} href="#" className="flex h-10 items-center gap-1 pl-2">
              {r.icon}
              {r.label}
            </a>
          ))}
          <div className="mt-auto">
            <Rule tone="via-[#cfccc0]" />
            <button type="button" className="flex h-[31px] items-center gap-3 pb-[2px] pl-[43px] text-[13px] font-bold">
              所有程式(P)
              <svg viewBox="0 0 17 23" className="h-[23px] w-[17px]" aria-hidden="true">
                <path d="M1 1v21l15-10.500z" fill="url(#green)" stroke="#2a8c2a" />
              </svg>
            </button>
          </div>
        </div>
        <div className="flex-1 border-l border-[#95bdee] bg-[#d3e5fa] pt-1">
          {places.map((p) => (
            <PlaceRow key={p.label} strong {...p} />
          ))}
          <Rule tone="via-[#86b4ec]" />
          {settings.map((p) => (
            <PlaceRow key={p.label} {...p} />
          ))}
          <Rule tone="via-[#86b4ec]" />
          {tools.map((p) => (
            <PlaceRow key={p.label} {...p} />
          ))}
        </div>
      </div>
      <footer className="flex h-[41px] shrink-0 items-center justify-end gap-[11px] bg-linear-to-b from-[#4389e6] via-[#2b73da] to-[#145fd2] pr-2 text-white">
        <button type="button" className="flex items-center gap-1">
          <KeyIcon className="h-6 w-6" />
          登出(L)
        </button>
        <button type="button" className="flex items-center gap-1">
          <PowerIcon className="h-6 w-6" />
          關機(U)
        </button>
      </footer>
    </section>
  );
}

function TrayIcons() {
  return (
    <div className="flex gap-[2px]">
      <Svg>
        <path d="M2 2h18v22H2z" fill="#f1e4b5" stroke="#8a5a21" strokeWidth="2" />
        <circle cx="13" cy="14" r="9" fill="#df572f" />
        <path d="M14 11h15v18H14z" fill="#3c74d8" stroke="#fff" strokeWidth="2" />
        <path d="M18 17h8v9h-8z" fill="#f0b732" />
      </Svg>
      <Svg>
        <circle cx="16" cy="16" r="15.500" fill="#0b16b8" />
        <path d="M3 18c3 0 3-7 6-7s2 11 5 11 2-12 5-12 2 9 5 9 2-4 5-4" fill="none" stroke="#fff" strokeWidth="2.400" />
      </Svg>
      <Svg>
        <path d="m13 3 17-1v14l-15 2z" fill="#1c3d8a" stroke="#b9c6e2" strokeWidth="2" />
        <path d="m2 11 17-1v13L4 25z" fill="#26509d" stroke="#b9c6e2" strokeWidth="2" />
        <path d="M6 28h12M22 21h7" stroke="#b9c6e2" strokeWidth="3" />
      </Svg>
      <span className="w-px" />
      <Svg>
        <path d="M16 1c4 3 8 4 12 4 0 12-2 21-12 26C6 26 4 17 4 5c4 0 8-1 12-4z" fill="#59b63a" stroke="#d9ecc0" strokeWidth="2" />
        <path d="M16 8v15M9 15h14" stroke="#fff" strokeWidth="4" />
      </Svg>
    </div>
  );
}

function Taskbar() {
  const task = "flex h-6 w-[159px] items-center gap-[3px] rounded-[2px] border border-[#4a8cf6] bg-[#3b80f2] pl-[9px] text-white";
  return (
    <footer className="flex h-[30px] shrink-0 items-stretch bg-linear-to-b from-[#4a8bf0] via-[#245edb] via-20% to-[#1f50c0]">
      <button
        type="button"
        className="flex w-[90px] items-center gap-1 rounded-r-[10px] bg-linear-to-b from-[#4aa648] via-[#2b8a2b] via-25% to-[#1f7320] pl-[7px] text-[17px] text-white italic [text-shadow:1px_1px_1px_#154015]"
      >
        <WindowsFlag className="h-[22px] w-[22px]" />
        開始
      </button>
      <div className="flex flex-1 items-center gap-[2px] pl-2">
        <button type="button" className={task}>
          <Connections className="h-4 w-4" />
          網路連線
        </button>
        <button type="button" className={task}>
          <WholeNetwork className="h-4 w-4" />
          整個網路
        </button>
      </div>
      <div className="flex w-[154px] items-center justify-between border-l border-[#0b57b8] bg-linear-to-b from-[#35b2f5] via-[#128de6] via-20% to-[#0f80da] pr-[13px] pl-[9px] text-white">
        <TrayIcons />
        <time>下午 01:14</time>
      </div>
    </footer>
  );
}

export default function App() {
  return (
    <div className={`min-h-screen bg-white pr-[2px] text-[12px] leading-4 text-black ${FONT}`} lang="zh-Hant">
      <SharedGradients />
      <div className="flex h-[786px] flex-col overflow-hidden">
        <main className="relative flex-1 bg-[#004e98]">
          <div className="flex w-[70px] flex-col items-center pt-[3px] text-center leading-3 text-white">
            <a href="#">我的電腦</a>
            <a href="#" className="mt-[30px] flex w-[62px] flex-col items-center gap-[5px]">
              <NetworkPlaces className="h-8 w-8" />
              網路上的芳鄰
            </a>
            <a href="#" className="mt-[18px] flex flex-col items-center gap-[5px]">
              <RecycleBin className="h-8 w-8" />
              資源回收筒
            </a>
          </div>
          <a href="#" className="absolute top-[3px] left-[1066px] leading-3 text-white">mspaint</a>
          <ConnectionsWindow />
          <NetworkWindow />
          <SystemDialog />
          <StartMenu />
        </main>
        <Taskbar />
      </div>
    </div>
  );
}
